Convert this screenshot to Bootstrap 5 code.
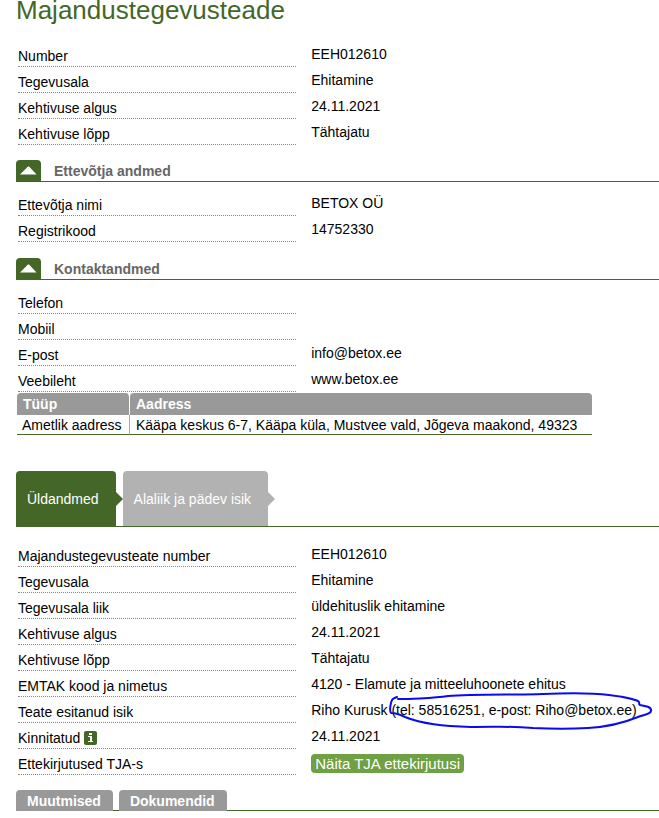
<!DOCTYPE html>
<html lang="et">
<head>
<meta charset="utf-8">
<meta name="viewport" content="width=device-width, initial-scale=1">
<title>Majandustegevusteade</title>
<link href="https://cdn.jsdelivr.net/npm/bootstrap@5.3.0/dist/css/bootstrap.min.css" rel="stylesheet">
<style>
:root { --green: #446728; --grey: #999; }
body { font-family: "Liberation Sans", Arial, sans-serif; font-size: 14px; line-height: 18px; color: #000; overflow-x: hidden; }
main { padding-left: 16px; }
.page-title { font-size: 26px; line-height: 20px; font-weight: 400; color: var(--green); margin-bottom: 21px; }
.fields { margin: 0; padding-left: 2px; }
.field-row { display: grid; grid-template-columns: 4fr 5fr; column-gap: 15px; min-height: 26px; }
.field-row dt { font-weight: 400; padding: 6px 0 1px; border-bottom: 1px dotted #888; }
.field-row dd { margin: 0; padding-top: 4px; }
.bar { height: 22px; margin: 15px 0 8px; border-bottom: 1px solid var(--green); }
.fields + .bar, section + section .bar { margin-top: 16px; }
.bar h2 { font-size: 14px; line-height: 22px; font-weight: 700; color: #666; margin: 0 0 0 13px; }
.toggle { width: 25px; height: 22px; padding: 0; border: 0; border-radius: 4px 4px 0 0; background: var(--green); }
.toggle svg { display: block; }
.address { margin: 1px 0 36px 1px; border-collapse: separate; border-spacing: 0; }
.address th { height: 22px; padding: 0 6px; background: var(--grey); color: #fff; border-radius: 4px 4px 0 0; }
.address th:first-child { width: 113px; border-right: 1px solid #fff; background-clip: padding-box; }
.address td { height: 20px; padding: 1px 15px 0 6px; border-bottom: 1px solid var(--green); white-space: nowrap; line-height: 18px; }
.address td:first-child { padding: 1px 5px 0; border-right: 1px solid #aaa; }
.step-tabs { gap: 7px; border-bottom: 1px solid var(--green); margin-bottom: 14px; }
.step { position: relative; height: 55px; padding: 0 17px 0 11px; border: 0; border-radius: 4px 4px 0 0; background: #b2b2b2; color: #fff; }
.step.active { background: var(--green); }
.step::after { content: ""; position: absolute; left: 100%; top: 21px; border: 7px solid transparent; border-left-color: #b2b2b2; border-right: 0; }
.step.active::after { border-left-color: var(--green); }
.info { width: 13px; height: 14px; padding: 0; border: 0; background: none; vertical-align: -2px; }
.info svg { display: block; }
.show-orders { height: 19px; margin-top: 1px; padding: 0 4px; border: 0; border-radius: 4px; background: #6fa043; color: #fff; font-size: 15px; line-height: 18px; vertical-align: top; }
.circled { position: relative; white-space: nowrap; }
.circled svg { position: absolute; left: -3px; top: -10px; pointer-events: none; }
.lower-tabs { gap: 6px; margin-top: 15px; box-shadow: inset 0 -1px var(--green); }
.lower-tabs button { height: 21px; padding: 1px 12px 0 11px; border: 0; border-radius: 4px 4px 0 0; background: var(--grey); color: #fff; font-weight: 700; line-height: 20px; }
</style>
<script src="https://cdn.jsdelivr.net/npm/bootstrap@5.3.0/dist/js/bootstrap.bundle.min.js"></script>
</head>
<body>
<main>
  <h1 class="page-title">Majandustegevusteade</h1>
  <dl class="fields">
    <div class="field-row"><dt>Number</dt><dd>EEH012610</dd></div>
    <div class="field-row"><dt>Tegevusala</dt><dd>Ehitamine</dd></div>
    <div class="field-row"><dt>Kehtivuse algus</dt><dd>24.11.2021</dd></div>
    <div class="field-row"><dt>Kehtivuse lõpp</dt><dd>Tähtajatu</dd></div>
  </dl>

  <section>
    <div class="bar d-flex">
      <button class="toggle" type="button" aria-label="Peida ettevõtja andmed"><svg width="25" height="22"><path d="M4 14.500 12 6.500h1L20.500 14.500z" fill="#fff"/></svg></button>
      <h2>Ettevõtja andmed</h2>
    </div>
    <dl class="fields">
      <div class="field-row"><dt>Ettevõtja nimi</dt><dd>BETOX OÜ</dd></div>
      <div class="field-row"><dt>Registrikood</dt><dd>14752330</dd></div>
    </dl>
  </section>

  <section>
    <div class="bar d-flex">
      <button class="toggle" type="button" aria-label="Peida kontaktandmed"><svg width="25" height="22"><path d="M4 14.500 12 6.500h1L20.500 14.500z" fill="#fff"/></svg></button>
      <h2>Kontaktandmed</h2>
    </div>
    <dl class="fields">
      <div class="field-row"><dt>Telefon</dt><dd></dd></div>
      <div class="field-row"><dt>Mobiil</dt><dd></dd></div>
      <div class="field-row"><dt>E-post</dt><dd>info@betox.ee</dd></div>
      <div class="field-row"><dt>Veebileht</dt><dd>www.betox.ee</dd></div>
    </dl>
    <table class="address">
      <thead><tr><th scope="col">Tüüp</th><th scope="col">Aadress</th></tr></thead>
      <tbody><tr><td>Ametlik aadress</td><td>Kääpa keskus 6-7, Kääpa küla, Mustvee vald, Jõgeva maakond, 49323</td></tr></tbody>
    </table>
  </section>

  <div class="step-tabs d-flex" role="tablist">
    <button class="step active" type="button" role="tab" aria-selected="true">Üldandmed</button>
    <button class="step" type="button" role="tab" aria-selected="false">Alaliik ja pädev isik</button>
  </div>
  <dl class="fields">
    <div class="field-row"><dt>Majandustegevusteate number</dt><dd>EEH012610</dd></div>
    <div class="field-row"><dt>Tegevusala</dt><dd>Ehitamine</dd></div>
    <div class="field-row"><dt>Tegevusala liik</dt><dd>üldehituslik ehitamine</dd></div>
    <div class="field-row"><dt>Kehtivuse algus</dt><dd>24.11.2021</dd></div>
    <div class="field-row"><dt>Kehtivuse lõpp</dt><dd>Tähtajatu</dd></div>
    <div class="field-row"><dt>EMTAK kood ja nimetus</dt><dd>4120 - Elamute ja mitteeluhoonete ehitus</dd></div>
    <div class="field-row"><dt>Teate esitanud isik</dt><dd>Riho Kurusk <span class="circled">(tel: 58516251, e-post: Riho@betox.ee)<svg width="266" height="40" viewBox="0 0 266 40" fill="none" stroke="#0a0af0" stroke-width="2" stroke-linecap="round" stroke-linejoin="round"><path d="M10 7H20C38 6 48 6 60 4C85 2 130 3 155 2C180 1 205 1 221 3C237 5 250 8 251 10C252 11 250 12 252 13C258 14 263 15 263 18C264 22 255 23 250 25C233 32 218 35 200 36C180 37 168 37 145 36C121 34 113 35 83 35C55 34 34 32 17 25C9 21 3 21 3 21C1 18 3 10 4 8C5 6 7 6 9 5"/></svg></span></dd></div>
    <div class="field-row"><dt>Kinnitatud <button class="info" type="button" aria-label="Info"><svg width="13" height="14"><rect width="13" height="14" rx="2" fill="#446728"/><path d="M5 2h3v2H5zM4 5h4v5h1v1H4v-1h2V6H4z" fill="#fff"/></svg></button></dt><dd>24.11.2021</dd></div>
    <div class="field-row"><dt>Ettekirjutused TJA-s</dt><dd><button class="show-orders" type="button">Näita TJA ettekirjutusi</button></dd></div>
  </dl>
  <div class="lower-tabs d-flex" role="tablist">
    <button type="button" role="tab">Muutmised</button>
    <button type="button" role="tab">Dokumendid</button>
  </div>
</main>
</body>
</html>
